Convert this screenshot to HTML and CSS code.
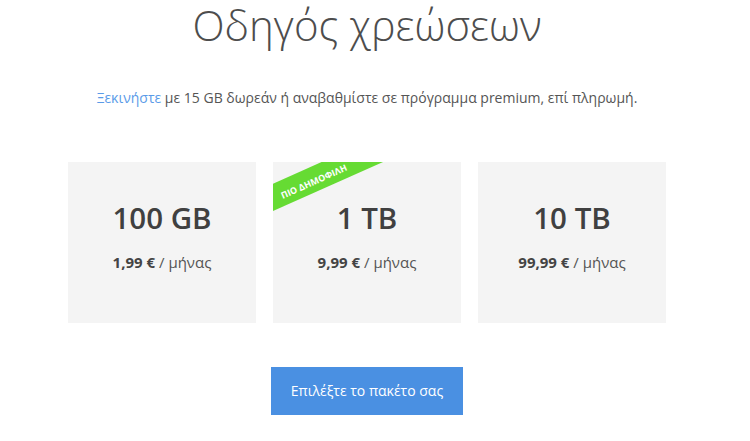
FILE: index.html
```html
<!DOCTYPE html>
<html lang="el">
<head>
<meta charset="utf-8">
<link rel="stylesheet" href="styles.css">
</head>
<body>
<main class="page">
  <h1 class="title">Οδηγός χρεώσεων</h1>
  <p class="intro"><a class="link" href="#">Ξεκινήστε</a> με 15 GB δωρεάν ή αναβαθμίστε σε πρόγραμμα premium, επί πληρωμή.</p>
  <section class="plans">
    <div class="plan">
      <div class="size">100 GB</div>
      <div class="price"><b>1,99 €</b> / μήνας</div>
    </div>
    <div class="plan">
      <div class="ribbon"><span class="ribbon-text">ΠΙΟ ΔΗΜΟΦΙΛΗ</span></div>
      <div class="size">1 TB</div>
      <div class="price"><b>9,99 €</b> / μήνας</div>
    </div>
    <div class="plan">
      <div class="size">10 TB</div>
      <div class="price"><b>99,99 €</b> / μήνας</div>
    </div>
  </section>
  <div class="actions">
    <a class="button" href="#">Επιλέξτε το πακέτο σας</a>
  </div>
</main>
</body>
</html>
```
FILE: styles.css
```css
html, body {
  margin: 0;
  padding: 0;
  background: #ffffff;
}
body {
  font-family: "Open Sans", "Noto Sans", sans-serif;
  color: #444;
}
.page {
  width: 734px;
  text-align: center;
  padding-top: 1px;
}
.title {
  margin: -5px 0 0;
  font-size: 42px;
  font-weight: 300;
  line-height: 1.4;
  color: #4d4d4d;
}
.intro {
  margin: 33px 0 0;
  font-size: 14px;
  line-height: 19px;
  color: #555;
}
.link {
  color: #5a9be8;
  text-decoration: none;
}
.plans {
  display: flex;
  justify-content: center;
  gap: 17px;
  margin-top: 55px;
}
.plan {
  position: relative;
  overflow: hidden;
  width: 188px;
  height: 161px;
  box-sizing: border-box;
  padding-top: 36px;
  background: #f4f4f4;
}
.size {
  font-size: 29.5px;
  font-weight: 600;
  line-height: 40px;
  color: #404040;
}
.price {
  margin-top: 14px;
  font-size: 15px;
  line-height: 20px;
  color: #555;
}
.price b {
  font-weight: 700;
  color: #444;
}
.ribbon {
  position: absolute;
  left: -42px;
  top: 5px;
  width: 164px;
  height: 25px;
  line-height: 25px;
  background: #66db33;
  transform: rotate(-24deg);
}
.ribbon-text {
  color: #fff;
  font-size: 9px;
  font-weight: 700;
}
.actions {
  margin-top: 44px;
  display: flex;
  justify-content: center;
}
.button {
  display: block;
  width: 192px;
  height: 48px;
  line-height: 48px;
  background: #4a90e2;
  color: #fff;
  font-size: 14px;
  text-decoration: none;
}
```
